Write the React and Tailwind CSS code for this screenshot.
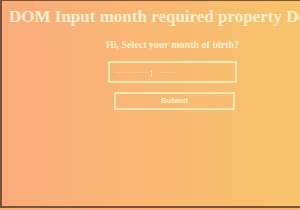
import React from 'react';

const cream = 'text-[#fdf1cf]';

function App() {
    return (
        <div className="w-[300px] h-[210px] overflow-hidden bg-[#f4b17a]">
            <div className="h-[208px] border-l-2 border-t border-b-2 border-[#7d5038] bg-gradient-to-r from-[#f9ab7b] to-[#f7c46b] overflow-hidden">
                <div className="w-[341px]" style={{ fontFamily: '"Liberation Serif", serif' }}>
                    <h1 className={`pl-[7px] pt-[6px] text-[17px] leading-[20px] font-bold whitespace-nowrap ${cream}`}>
                        DOM Input month required property Demo
                    </h1>
                    <p className={`mt-[12px] text-center text-[10px] leading-[12px] font-bold ${cream}`}>
                        Hi, Select your month of birth?
                    </p>
                    <div className="mt-[10px] flex flex-col items-center">
                        <div className="w-[129px] h-[22px] border-2 border-[#fde7b4] flex items-center pl-[4px] gap-[2px]" style={{ fontFamily: '"Liberation Sans", sans-serif' }}>
                            <span className={`text-[7px] tracking-[1.2px] text-[#fce6bd]`}>----------</span>
                            <span className="w-px h-[6px] mt-[4px] bg-[#fdf1cf]"></span>
                            <span className={`text-[7px] tracking-[1.2px] ml-[5px] text-[#fce6bd]`}>-----</span>
                        </div>
                        <button className={`mt-[9px] ml-[4px] w-[121px] h-[18px] border-2 border-[#fde7b4] text-[8px] font-bold ${cream}`} style={{ fontFamily: '"Liberation Sans", sans-serif' }}>
                            Submit
                        </button>
                    </div>
                </div>
            </div>
        </div>
    );
}

export default App;
